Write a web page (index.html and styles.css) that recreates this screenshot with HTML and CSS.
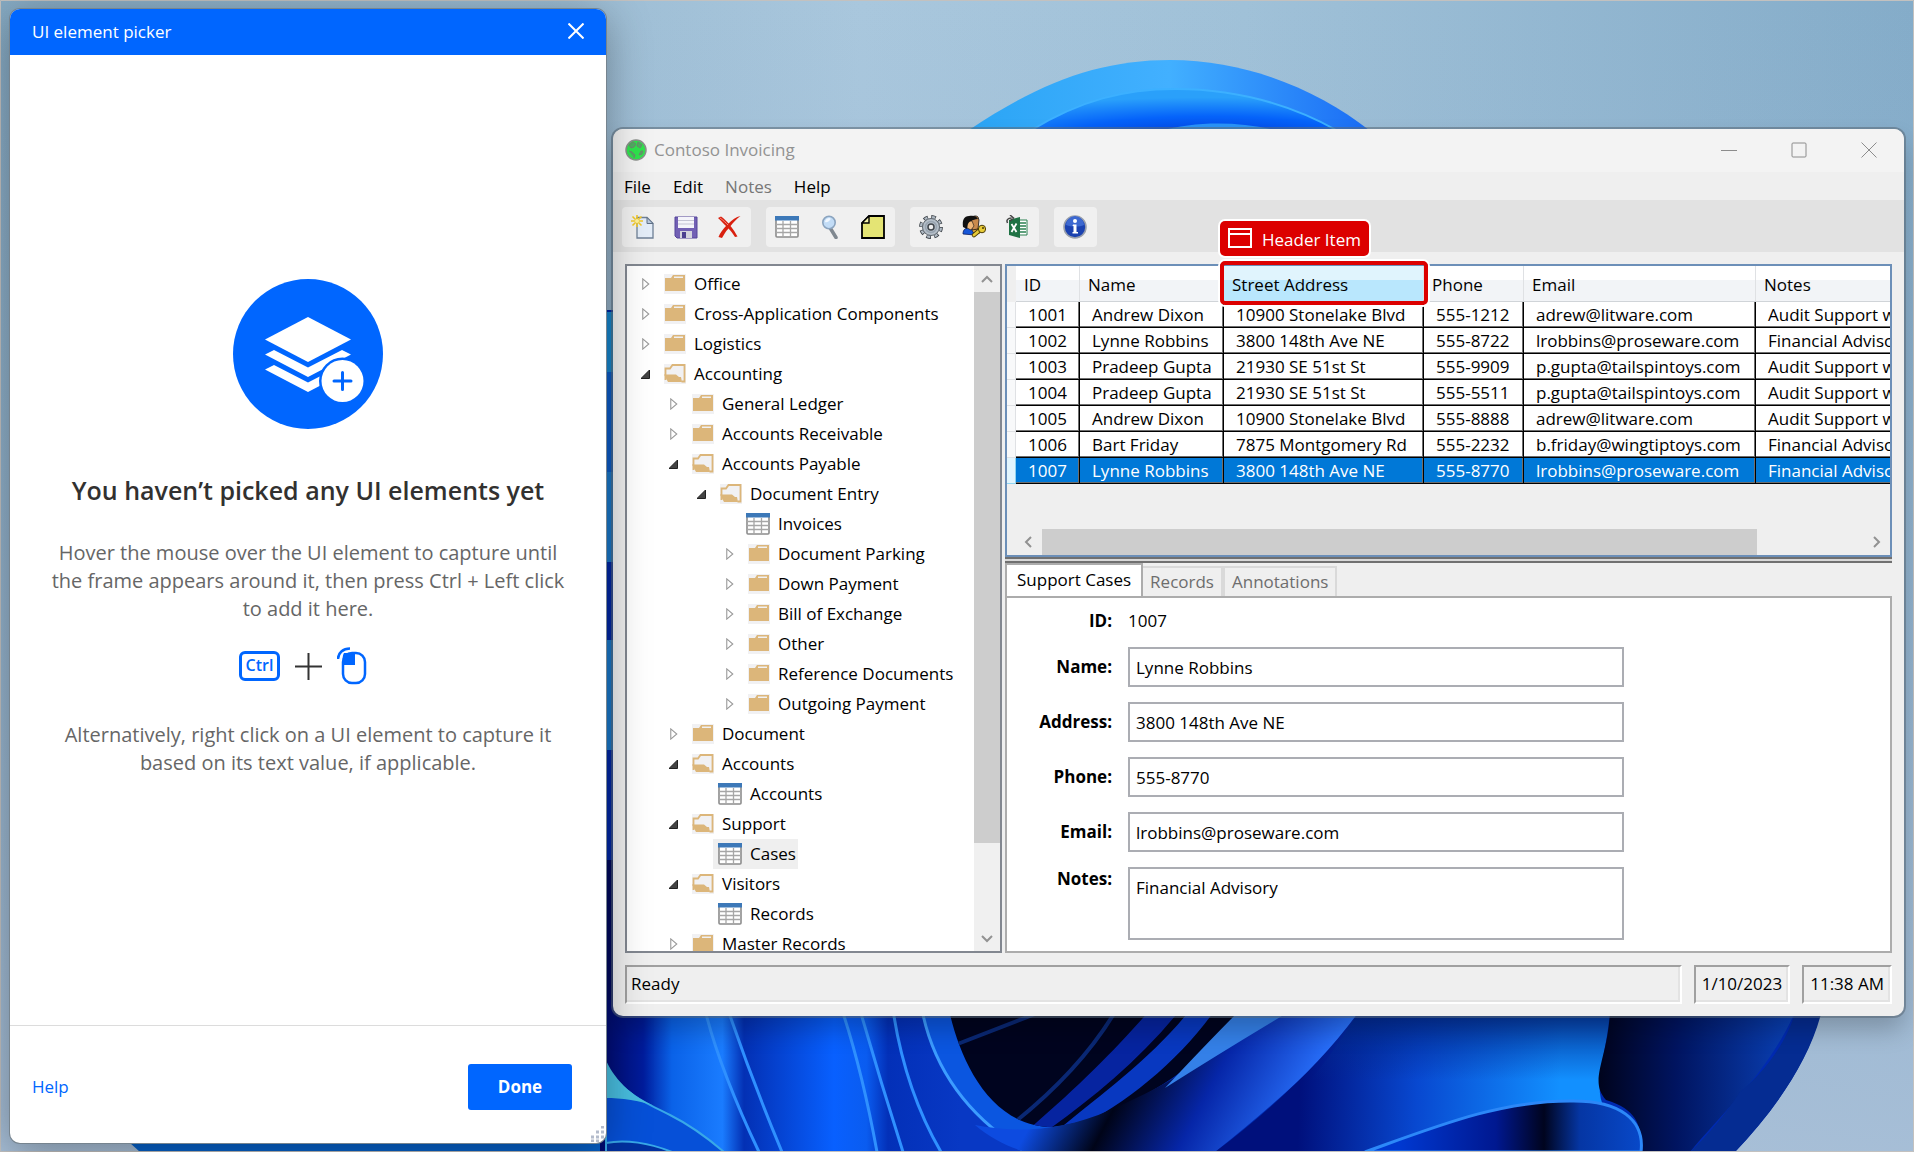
FILE: index.html
```html
<!DOCTYPE html>
<html lang="en">
<head>
<meta charset="utf-8">
<title>UI element picker</title>
<link rel="stylesheet" href="styles.css">
</head>
<body>
<svg width="0" height="0" class="defs" aria-hidden="true">
  <defs>
    <symbol id="folder" viewBox="0 0 22 20">
      <rect width="22" height="20" fill="#f1f1f3"/>
      <path d="M1 4h6l2-3h12v16H1z" fill="#dcb67a"/>
      <path d="M10 2.500h9v1.500h-9z" fill="#f1f1f3"/>
    </symbol>
    <symbol id="folder-open" viewBox="0 0 22 20">
      <rect width="22" height="20" fill="#f1f1f3"/>
      <path d="M1.500 16V4.500H6L8.500 1h12v16.500h-3" fill="none" stroke="#dcb67a" stroke-width="1.800"/>
      <path d="M0 10.500h12l3 2.500h2l1 5H4z" fill="#dcb67a"/>
    </symbol>
    <symbol id="grid" viewBox="0 0 24 22">
      <rect x="1" y="1" width="22" height="20" rx="1" fill="#fff" stroke="#8c8c8c" stroke-width="1.600"/>
      <path d="M1 8.500h22M1 12.500h22M1 16.500h22M8 5v16M15.500 5v16" stroke="#a6a6a6" stroke-width="1.300"/>
      <path d="M0 0h24v4.500H0z" fill="#3c78b8"/>
    </symbol>
    <symbol id="closed" viewBox="0 0 9 13">
      <path d="M1 1v11l6.500-5.500z" fill="#fff" stroke="#9a9a9a" stroke-width="1.200"/>
    </symbol>
    <symbol id="opened" viewBox="0 0 10 12">
      <path d="M8.500 2v8.500H0z" fill="#444" stroke="#222"/>
    </symbol>
  </defs>
</svg>

<svg class="wallpaper" viewBox="0 0 1914 1152" preserveAspectRatio="xMidYMid slice" aria-hidden="true">
  <defs>
    <linearGradient id="sky" x1="0" y1="0" x2="1" y2="0"><stop offset="0" stop-color="#86aac3"/><stop offset=".45" stop-color="#a9c7dd"/><stop offset=".65" stop-color="#a0c1d8"/><stop offset="1" stop-color="#84acc9"/></linearGradient>
    <linearGradient id="haze" x1="0" y1="0" x2="0" y2="1"><stop offset="0" stop-color="#98b4d0" stop-opacity="0"/><stop offset="1" stop-color="#aac0d8" stop-opacity=".9"/></linearGradient>
    <linearGradient id="petal1" x1="0" y1="0" x2="1" y2="0"><stop offset="0" stop-color="#2ba5f5"/><stop offset=".5" stop-color="#42b0ff"/><stop offset="1" stop-color="#1a6cf5"/></linearGradient>
    <radialGradient id="petal2" cx=".58" cy="1.1" r=".9"><stop offset="0" stop-color="#0340e0"/><stop offset=".5" stop-color="#0563fa"/><stop offset="1" stop-color="#2aa0fa"/></radialGradient>
    <linearGradient id="left" gradientUnits="userSpaceOnUse" x1="600" y1="0" x2="960" y2="0"><stop offset="0" stop-color="#000a70"/><stop offset=".12" stop-color="#001c9c"/><stop offset=".2" stop-color="#0a62e8"/><stop offset=".34" stop-color="#1a7cff"/><stop offset=".4" stop-color="#0330b4"/><stop offset=".65" stop-color="#0860ff"/><stop offset=".74" stop-color="#0a5cf0"/><stop offset=".8" stop-color="#0330b8"/><stop offset="1" stop-color="#0838c4"/></linearGradient>
    <linearGradient id="fold" gradientUnits="userSpaceOnUse" x1="1080" y1="1030" x2="1290" y2="1140"><stop offset="0" stop-color="#0d4be0"/><stop offset=".28" stop-color="#000418"/><stop offset=".6" stop-color="#0626a8"/><stop offset="1" stop-color="#2a74ff"/></linearGradient>
    <linearGradient id="sheet" gradientUnits="userSpaceOnUse" x1="1300" y1="1080" x2="1560" y2="1090"><stop offset="0" stop-color="#00107c"/><stop offset=".45" stop-color="#0848d0"/><stop offset="1" stop-color="#1290ff"/></linearGradient>
    <linearGradient id="shade" x1="0" y1="0" x2="0" y2="1"><stop offset="0" stop-color="#022a90" stop-opacity=".9"/><stop offset=".7" stop-color="#022a90" stop-opacity="0"/></linearGradient>
    <linearGradient id="right" gradientUnits="userSpaceOnUse" x1="1600" y1="0" x2="1790" y2="0"><stop offset="0" stop-color="#00041e"/><stop offset=".4" stop-color="#001460"/><stop offset="1" stop-color="#0a40b4"/></linearGradient>
    <linearGradient id="cup" gradientUnits="userSpaceOnUse" x1="1400" y1="0" x2="1640" y2="0"><stop offset="0" stop-color="#0038d0"/><stop offset=".4" stop-color="#001890"/><stop offset=".6" stop-color="#00041e"/><stop offset=".75" stop-color="#0536a4"/><stop offset="1" stop-color="#0848c8"/></linearGradient>
    <clipPath id="valley"><path d="M949 1010C960 1060 990 1127 1053 1127C1110 1120 1160 1090 1210 1050L1290 1010z"/></clipPath>
  </defs>
  <path d="M0 0h1914v1152H0z" fill="url(#sky)"/>
  <path d="M0 0h1914v1152H0z" fill="url(#haze)"/>
  <path d="M969 130C1040 82 1100 60 1170 60C1250 60 1320 92 1369 130V300H969z" fill="url(#petal1)"/>
  <path d="M1030 131C1080 100 1125 89 1175 89C1235 89 1290 104 1338 131z" fill="url(#petal2)" stroke="#3cb0ff" stroke-width="2"/>
  <path d="M1160 131C1195 121 1240 121 1280 131z" fill="#2a94f8"/>
  <path d="M600 310L560 340V1152H1735C1775 1110 1810 1060 1821 1010V900H1300V310z" fill="#002ab0"/>
  <path d="M600 312h20v60h-20z" fill="#1890dc"/>
  <path d="M600 372h20v100h-20z" fill="#0c62d4"/>
  <path d="M600 472h20v90h-20zM600 640h20v110h-20z" fill="#1c80d8"/>
  <path d="M600 860h20v157h-20z" fill="#000a64"/>
  <path d="M130 1143H610V1152H140z" fill="#0560c8"/>
  <path d="M600 1000H950L1060 1152H600z" fill="url(#left)"/>
  <g fill="none" stroke-width="3" stroke="#2f90ff">
    <path d="M705 1010Q720 1070 759 1152M728 1010Q752 1080 782 1152M842 1010Q862 1070 877 1152M860 1010Q880 1080 903 1152M893 1010Q905 1090 941 1152"/>
  </g>
  <path d="M922 1010Q940 1100 1026 1152H1110L1160 1080L949 1010z" fill="#0b56e0"/>
  <path d="M922 1010Q940 1100 1026 1152" fill="none" stroke="#3c9cff" stroke-width="3"/>
  <path d="M606 1068C625 1095 650 1105 670 1115C690 1125 710 1140 724 1152H606z" fill="#0650d8" stroke="#38a8e8" stroke-width="2"/>
  <path d="M606 1143C625 1139 650 1143 672 1152H606z" fill="#0230a0" stroke="#38a8e8" stroke-width="2"/>
  <path d="M606 1060C612 1075 630 1098 660 1108C640 1100 620 1098 606 1098z" fill="#48bee0"/>
  <path d="M949 1010C960 1060 990 1127 1053 1127C1110 1120 1160 1090 1210 1050L1290 1010z" fill="#00041f"/>
  <g clip-path="url(#valley)">
    <path d="M1015 1122Q1080 1070 1115 1012M955 1045L1035 1014" stroke="#0a2874" stroke-width="4" fill="none"/>
    <path d="M1028 1130C1080 1085 1115 1050 1150 1010H1180C1140 1060 1090 1100 1048 1130z" fill="#0624a0"/>
    <path d="M1058 1130C1100 1095 1150 1060 1190 1010H1215C1180 1060 1120 1110 1070 1130z" fill="#0838c0"/>
  </g>
  <path d="M1026 1152C1010 1148 990 1138 975 1125C1010 1132 1060 1133 1110 1110C1180 1080 1220 1050 1270 1010H1362Q1330 1060 1215 1152z" fill="url(#fold)"/>
  <path d="M1165 1088Q1225 1050 1292 1010H1240Q1210 1040 1165 1088z" fill="#3480e8"/>
  <path d="M1360 1010H1610C1606 1060 1592 1085 1605 1110L1365 1152H1215Q1310 1080 1360 1010z" fill="url(#sheet)"/>
  <path d="M1360 1010H1610C1608 1050 1598 1080 1600 1110H1285Q1330 1060 1360 1010z" fill="url(#shade)"/>
  <path d="M1610 1010C1608 1060 1588 1080 1606 1100C1640 1110 1642 1130 1641 1152H1690C1725 1110 1770 1070 1796 1010z" fill="url(#right)"/>
  <path d="M1796 1010C1785 1050 1755 1080 1740 1092C1725 1115 1708 1135 1690 1152H1735C1775 1110 1810 1060 1822 1010z" fill="#052c92"/>
  <path d="M1365 1152C1440 1125 1500 1101 1570 1101C1620 1100 1645 1120 1641 1152z" fill="url(#cup)" stroke="#2c88f8" stroke-width="3"/>
  <path d="M.5 .5h1913v1151H.5z" fill="none" stroke="#c3c1bf"/>
</svg>

<main class="desktop">
  <section class="invoicing" aria-label="Contoso Invoicing">
    <header class="titlebar">
      <svg class="app-icon" viewBox="0 0 22 22"><circle cx="11" cy="11" r="10" fill="#2fe34c" stroke="#8a8f8a" stroke-width="1.500"/><path d="M4 6l4-3 3 2-2 3-3 1zM13 3l4 3-2 3-3-2zM4 12l3 1 3 3-1 3M16 12l2 0-1 3-3 1z" fill="#4fae60" stroke="#6c8a6e"/></svg>
      <h1 class="titlebar-text">Contoso Invoicing</h1>
      <button class="caption" aria-label="Minimize"><svg viewBox="0 0 16 16"><path d="M0 8.500h16"/></svg></button>
      <button class="caption" aria-label="Maximize"><svg viewBox="0 0 16 16"><rect x="1" y="1" width="14" height="14" rx="1"/></svg></button>
      <button class="caption" aria-label="Close"><svg viewBox="0 0 16 16"><path d="M.5.5l15 15M15.500.5l-15 15"/></svg></button>
    </header>
    <nav class="menubar">
      <button>File</button><button>Edit</button><button disabled>Notes</button><button>Help</button>
    </nav>
    <div class="toolbar">
      <div class="tools">
        <button aria-label="New"><svg viewBox="0 0 24 24"><path d="M6 2.500h10l6 6V23H6z" fill="#e4edf8" stroke="#6f8096" stroke-width="1.300"/><path d="M16 2.500v6h6z" fill="#b8c8dc" stroke="#5f7086"/><path d="M6 0v12M0 6h12M1.500 1.500l9 9M10.500 1.500l-9 9" stroke="#f2c928" stroke-width="1.600"/><circle cx="6" cy="6" r="2" fill="#fff29a"/></svg></button>
        <button aria-label="Save"><svg viewBox="0 0 24 24"><path d="M1 2h22v21H3l-2-2z" fill="#7260b4" stroke="#54449a"/><path d="M4 2h16v11H4z" fill="#f4f4fa"/><path d="M4 5.500h16M4 9h16" stroke="#c4c4d4"/><path d="M6 16h12v7H6z" fill="#d4d4de"/><path d="M8 17h4v6H8z" fill="#4c4090"/></svg></button>
        <button aria-label="Delete"><svg viewBox="0 0 24 24"><path d="M1 3l3-1.500c3 2 5 4 7.500 7C15 5 19 2 23.500 1c-4 3-7 6-10 10 3 3.500 5 7 7 10.500L18 22c-2-3-4-6-6.500-8.500C8 17 7 20 5 23l-3.500-1C3 18 6 14 9 11 6 8 4 6 1 3z" fill="#d9200f"/><path d="M3 3c3 2 6 5 8 7" stroke="#f58a7c" fill="none"/></svg></button>
      </div>
      <div class="tools">
        <button aria-label="Table"><svg viewBox="0 0 24 24"><use href="#grid" width="24" height="22" y="1"/></svg></button>
        <button aria-label="Search"><svg viewBox="0 0 24 24"><path d="M12.500 13.500L18 22.500" stroke="#808890" stroke-width="3.500" stroke-linecap="round"/><circle cx="11" cy="7.500" r="6.200" fill="#c2dcf6" stroke="#8ba4bf" stroke-width="1.600"/><path d="M7 7a4.500 4.500 0 014-4c2 0 2 1 1 2s-3 3-5 2z" fill="#f0f7ff"/></svg></button>
        <button aria-label="Note"><svg viewBox="0 0 24 24"><path d="M8 1h15v22H1V8z" fill="#e4e474" stroke="#000" stroke-width="1.800"/><path d="M8 1v7H1z" fill="#f4f4a8" stroke="#000" stroke-width="1.400"/></svg></button>
      </div>
      <div class="tools">
        <button aria-label="Settings"><svg viewBox="0 0 24 24"><circle cx="12" cy="12" r="10.200" fill="none" stroke="#3c4248" stroke-width="3.400" stroke-dasharray="4.600 3.410"/><circle cx="12" cy="12" r="9.800" fill="none" stroke="#b0bac4" stroke-width="2.600" stroke-dasharray="3 4.697" stroke-dashoffset="-.8"/><circle cx="12" cy="12" r="8.500" fill="#b4bec8" stroke="#5c646c" stroke-width="1"/><circle cx="12" cy="12" r="5.500" fill="none" stroke="#98a4b0" stroke-width="1.500"/><circle cx="12" cy="12" r="3" fill="#efefef" stroke="#40464c" stroke-width="1.500"/></svg></button>
        <button aria-label="Permissions"><svg viewBox="0 0 24 24"><path d="M10 13h8v6h-9z" fill="#e8b040"/><path d="M9 4c1-3 5-4 7-2l1 3-1 9-6 1z" fill="#c98a4c" stroke="#111" stroke-width=".8"/><path d="M1 19c0-5 3-7 8-5l4 6z" fill="#1656d8" stroke="#0a1c60" stroke-width=".8"/><path d="M5 6h5l2 5-3 4-4-2z" fill="#f0b878" stroke="#111" stroke-width=".6"/><path d="M1 12C0 5 2 1 7 1c4-1 8 0 9 3-3 0-5 1-7 2-3 1-4 5-4 8z" fill="#111"/><path d="M12 20l6-5" stroke="#4a3a08" stroke-width="4.500" stroke-linecap="round"/><path d="M12 20l6-5" stroke="#e8cc38" stroke-width="2.800" stroke-linecap="round"/><ellipse cx="20" cy="14" rx="3.600" ry="3.800" fill="#e8cc38" stroke="#4a3a08"/><circle cx="21" cy="13" r="1" fill="#4a3a08"/></svg></button>
        <button aria-label="Export to Excel"><svg viewBox="0 0 24 24"><path d="M14 5h8v15h-8z" fill="#fff" stroke="#2a8050"/><path d="M15 8h6M15 11h6M15 14h6M15 17h6" stroke="#2a8050" stroke-width="1.500"/><path d="M4 5l11-3v21L4 20z" fill="#1f7244"/><path d="M6.500 9l5 8M11.500 8.500L6.500 17" stroke="#fff" stroke-width="1.800"/><path d="M2.500 8C1 5 3 3 6.500 3M5 0l3.500 3L5 6" fill="none" stroke="#444" stroke-width="1.500"/></svg></button>
      </div>
      <div class="tools">
        <button aria-label="About"><svg viewBox="0 0 24 24"><circle cx="12" cy="12" r="11" fill="#1b42b0" stroke="#9aa0ac" stroke-width="1.600"/><path d="M3 10a9 9 0 0118 0c-5 2-12 2-18 0z" fill="#3c68d0"/><circle cx="12" cy="6" r="2" fill="#fff"/><path d="M10 9.500h3.500V17H15v1.500H9.500V17H10.500v-6H9.500z" fill="#fff"/></svg></button>
      </div>
    </div>

    <div class="panes">
      <div class="tree-pane">
        <ul class="tree">
          <li><button class="node"><svg class="exp"><use href="#closed"/></svg><svg class="ico"><use href="#folder"/></svg>Office</button></li>
          <li><button class="node"><svg class="exp"><use href="#closed"/></svg><svg class="ico"><use href="#folder"/></svg>Cross-Application Components</button></li>
          <li><button class="node"><svg class="exp"><use href="#closed"/></svg><svg class="ico"><use href="#folder"/></svg>Logistics</button></li>
          <li><button class="node"><svg class="exp"><use href="#opened"/></svg><svg class="ico"><use href="#folder-open"/></svg>Accounting</button>
            <ul>
              <li><button class="node"><svg class="exp"><use href="#closed"/></svg><svg class="ico"><use href="#folder"/></svg>General Ledger</button></li>
              <li><button class="node"><svg class="exp"><use href="#closed"/></svg><svg class="ico"><use href="#folder"/></svg>Accounts Receivable</button></li>
              <li><button class="node"><svg class="exp"><use href="#opened"/></svg><svg class="ico"><use href="#folder-open"/></svg>Accounts Payable</button>
                <ul>
                  <li><button class="node"><svg class="exp"><use href="#opened"/></svg><svg class="ico"><use href="#folder-open"/></svg>Document Entry</button>
                    <ul>
                      <li><button class="node leaf"><svg class="sheet"><use href="#grid"/></svg>Invoices</button></li>
                      <li><button class="node"><svg class="exp"><use href="#closed"/></svg><svg class="ico"><use href="#folder"/></svg>Document Parking</button></li>
                      <li><button class="node"><svg class="exp"><use href="#closed"/></svg><svg class="ico"><use href="#folder"/></svg>Down Payment</button></li>
                      <li><button class="node"><svg class="exp"><use href="#closed"/></svg><svg class="ico"><use href="#folder"/></svg>Bill of Exchange</button></li>
                      <li><button class="node"><svg class="exp"><use href="#closed"/></svg><svg class="ico"><use href="#folder"/></svg>Other</button></li>
                      <li><button class="node"><svg class="exp"><use href="#closed"/></svg><svg class="ico"><use href="#folder"/></svg>Reference Documents</button></li>
                      <li><button class="node"><svg class="exp"><use href="#closed"/></svg><svg class="ico"><use href="#folder"/></svg>Outgoing Payment</button></li>
                    </ul>
                  </li>
                </ul>
              </li>
              <li><button class="node"><svg class="exp"><use href="#closed"/></svg><svg class="ico"><use href="#folder"/></svg>Document</button></li>
              <li><button class="node"><svg class="exp"><use href="#opened"/></svg><svg class="ico"><use href="#folder-open"/></svg>Accounts</button>
                <ul><li><button class="node leaf"><svg class="sheet"><use href="#grid"/></svg>Accounts</button></li></ul>
              </li>
              <li><button class="node"><svg class="exp"><use href="#opened"/></svg><svg class="ico"><use href="#folder-open"/></svg>Support</button>
                <ul><li><button class="node leaf selected"><svg class="sheet"><use href="#grid"/></svg>Cases</button></li></ul>
              </li>
              <li><button class="node"><svg class="exp"><use href="#opened"/></svg><svg class="ico"><use href="#folder-open"/></svg>Visitors</button>
                <ul><li><button class="node leaf"><svg class="sheet"><use href="#grid"/></svg>Records</button></li></ul>
              </li>
              <li><button class="node"><svg class="exp"><use href="#closed"/></svg><svg class="ico"><use href="#folder"/></svg>Master Records</button></li>
            </ul>
          </li>
        </ul>
        <div class="scroll-y">
          <button aria-label="Scroll up"><svg viewBox="0 0 12 12"><path d="M1 9l5-5 5 5"/></svg></button>
          <div class="track-y"><div class="thumb-y"></div></div>
          <button aria-label="Scroll down"><svg viewBox="0 0 12 12"><path d="M1 4l5 5 5-5"/></svg></button>
        </div>
      </div>

      <div class="detail-pane">
        <div class="grid-pane">
          <div class="grid-scroll">
            <table class="cases">
              <colgroup><col class="c-head"><col class="c-id"><col class="c-name"><col class="c-street"><col class="c-phone"><col class="c-email"><col class="c-notes"></colgroup>
              <thead><tr><td></td><th>ID</th><th>Name</th><th class="picked">Street Address
                <div class="frame"></div>
                <div class="tag"><svg viewBox="0 0 24 20"><path d="M1 1h22v18H1zM1 6h22"/></svg>Header Item</div>
              </th><th>Phone</th><th>Email</th><th>Notes</th></tr></thead>
              <tbody>
                <tr><td></td><td>1001</td><td>Andrew Dixon</td><td>10900 Stonelake Blvd</td><td>555-1212</td><td>adrew@litware.com</td><td>Audit Support w</td></tr>
                <tr><td></td><td>1002</td><td>Lynne Robbins</td><td>3800 148th Ave NE</td><td>555-8722</td><td>lrobbins@proseware.com</td><td>Financial Advisory</td></tr>
                <tr><td></td><td>1003</td><td>Pradeep Gupta</td><td>21930 SE 51st St</td><td>555-9909</td><td>p.gupta@tailspintoys.com</td><td>Audit Support w</td></tr>
                <tr><td></td><td>1004</td><td>Pradeep Gupta</td><td>21930 SE 51st St</td><td>555-5511</td><td>p.gupta@tailspintoys.com</td><td>Audit Support w</td></tr>
                <tr><td></td><td>1005</td><td>Andrew Dixon</td><td>10900 Stonelake Blvd</td><td>555-8888</td><td>adrew@litware.com</td><td>Audit Support w</td></tr>
                <tr><td></td><td>1006</td><td>Bart Friday</td><td>7875 Montgomery Rd</td><td>555-2232</td><td>b.friday@wingtiptoys.com</td><td>Financial Advisory</td></tr>
                <tr class="current"><td></td><td>1007</td><td>Lynne Robbins</td><td>3800 148th Ave NE</td><td>555-8770</td><td>lrobbins@proseware.com</td><td>Financial Advisory</td></tr>
              </tbody>
            </table>
          </div>
          <div class="scroll-x">
            <button aria-label="Scroll left"><svg viewBox="0 0 12 12"><path d="M8 1L3 6l5 5"/></svg></button>
            <div class="track-x"><div class="thumb-x"></div></div>
            <button aria-label="Scroll right"><svg viewBox="0 0 12 12"><path d="M3 1l5 5-5 5"/></svg></button>
          </div>
        </div>
        <div class="splitter"></div>
        <div class="tabs" role="tablist">
          <button role="tab" aria-selected="true" class="active">Support Cases</button>
          <button role="tab" aria-selected="false">Records</button>
          <button role="tab" aria-selected="false">Annotations</button>
        </div>
        <form class="record">
          <span class="label">ID:</span><output>1007</output>
          <label class="label" for="f-name">Name:</label><input id="f-name" value="Lynne Robbins">
          <label class="label" for="f-address">Address:</label><input id="f-address" value="3800 148th Ave NE">
          <label class="label" for="f-phone">Phone:</label><input id="f-phone" value="555-8770">
          <label class="label" for="f-email">Email:</label><input id="f-email" value="lrobbins@proseware.com">
          <label class="label top" for="f-notes">Notes:</label><textarea id="f-notes">Financial Advisory</textarea>
        </form>
      </div>
    </div>

    <footer class="status">
      <div class="cell wide">Ready</div><div class="cell">1/10/2023</div><div class="cell">11:38 AM</div>
    </footer>
  </section>

  <section class="picker" aria-label="UI element picker">
    <header class="picker-head">
      <span>UI element picker</span>
      <button aria-label="Close"><svg viewBox="0 0 16 16"><path d="M.5.5l15 15M15.500.5l-15 15"/></svg></button>
    </header>
    <div class="picker-body">
      <svg class="hero" viewBox="0 0 150 150" aria-hidden="true">
        <circle cx="75" cy="75" r="75" fill="#0066ff"/>
        <g fill="#fff">
          <path d="M75 38l43 22.500-43 22.500-43-22.500z"/>
          <path d="M41 71l34 17.500L109 71l9 4.500L75 98 32 75.500z"/>
          <path d="M41 86l34 17.500L109 86l9 4.500L75 113 32 90.500z"/>
        </g>
        <circle cx="109.500" cy="102" r="21" fill="#fff" stroke="#0066ff" stroke-width="5"/>
        <circle cx="109.500" cy="102" r="21" fill="#fff"/>
        <path d="M109.500 93.500v17M101 102h17" stroke="#0066ff" stroke-width="3" stroke-linecap="round"/>
      </svg>
      <h2>You haven’t picked any UI elements yet</h2>
      <p>Hover the mouse over the UI element to capture until the frame appears around it, then press Ctrl + Left click to add it here.</p>
      <div class="combo">
        <kbd>Ctrl</kbd>
        <svg class="plus" viewBox="0 0 27 27"><path d="M13.500 0v27M0 13.500h27"/></svg>
        <svg class="mouse" viewBox="0 0 30 38"><path d="M7 6h11V18H6c0-5-1-9 1-12z" fill="#0066ff"/><rect x="6" y="6" width="22" height="30" rx="9" fill="none" stroke="#0066ff" stroke-width="2.500"/><path d="M1 12C1 6 6 1.500 13 1.500" fill="none" stroke="#0066ff" stroke-width="2.500"/></svg>
      </div>
      <p>Alternatively, right click on a UI element to capture it based on its text value, if applicable.</p>
    </div>
    <footer class="picker-foot">
      <a href="#help">Help</a>
      <button>Done</button>
      <svg class="grip" viewBox="0 0 16 16" aria-hidden="true"><path d="M12 1h3M7 6h3M12 6h3M2 11h3M7 11h3M12 11h3M2 15h3M7 15h3" stroke="#b4bccc" stroke-width="3"/></svg>
    </footer>
  </section>
</main>
</body>
</html>
```
FILE: styles.css
```css
* { box-sizing: border-box; }

body {
  margin: 0;
  min-height: 100vh;
  overflow: hidden;
  font: 17px/24px "Open Sans", "Noto Sans", sans-serif;
  color: #000;
}

button, input, textarea, output { font: inherit; color: inherit; }
button { margin: 0; padding: 0; border: 0; background: none; }
ul { margin: 0; padding: 0; list-style: none; }

.defs { position: absolute; }

.wallpaper {
  position: absolute;
  inset: 0;
  width: 100%;
  height: 100%;
}

.desktop {
  position: relative;
  height: 100vh;
}

/* Invoicing window */

.invoicing {
  position: absolute;
  top: 129px;
  right: 10px;
  bottom: 136px;
  left: 613px;
  display: flex;
  flex-direction: column;
  border-radius: 10px;
  background: #efefef;
  box-shadow: 0 0 0 2px rgba(90, 105, 120, .55), 0 14px 24px rgba(0, 0, 0, .22);
}

.titlebar {
  display: flex;
  align-items: center;
  height: 43px;
  padding: 0 0 2px 12px;
  border-radius: 10px 10px 0 0;
  background: #f3f3f3;
}

.app-icon { width: 22px; height: 22px; }

.titlebar-text {
  flex: 1;
  margin: 0 0 0 7px;
  font-size: 17px;
  font-weight: 400;
  color: #929292;
}

.caption {
  width: 70px;
  height: 41px;
  display: grid;
  place-items: center;
}

.caption svg {
  width: 16px;
  height: 16px;
  fill: none;
  stroke: #8c8c8c;
}

.menubar {
  display: flex;
  gap: 22px;
  height: 28px;
  padding: 2px 0 0 11px;
  align-items: center;
}

.menubar button:disabled { color: #767676; }

.toolbar {
  display: flex;
  gap: 15px;
  height: 52px;
  padding: 7px 9px 5px;
  background: #e2e2e2;
}

.tools {
  display: flex;
  border-radius: 4px;
  background: #f0f0f0;
}

.tools button {
  width: 43px;
  padding-right: 2px;
  display: grid;
  place-items: center;
}

.tools svg { width: 24px; height: 24px; }

.panes {
  flex: 1;
  min-height: 0;
  display: flex;
  gap: 3px;
  padding: 12px 12px 0;
}

/* Navigation tree */

.tree-pane {
  flex: none;
  width: 377px;
  display: flex;
  overflow: hidden;
  border: 2px solid #828790;
  background: #fff;
}

.tree {
  flex: 1;
  height: 0;
  padding: 3px 0 0 14px;
}

.tree ul { padding-left: 28px; }

.node {
  display: flex;
  align-items: center;
  height: 30px;
  padding-right: 2px;
  white-space: nowrap;
}

.exp { width: 10px; height: 12px; margin-right: 13px; }
.ico { width: 22px; height: 20px; margin-right: 8px; }
.sheet { width: 24px; height: 22px; margin-right: 8px; }
.leaf { margin-left: 16px; padding-left: 5px; }
.selected { background: #efefef; }

.scroll-y {
  width: 26px;
  display: flex;
  flex-direction: column;
  background: #f0f0f0;
}

.scroll-y button { height: 26px; }
.track-y { flex: 1; }
.thumb-y { height: 87%; background: #cdcdcd; }

.scroll-y svg, .scroll-x svg {
  width: 12px;
  height: 12px;
  fill: none;
  stroke: #929292;
  stroke-width: 2;
}

/* Case list */

.detail-pane {
  flex: 1;
  min-width: 0;
  display: flex;
  flex-direction: column;
}

.grid-pane {
  flex: none;
  display: flex;
  flex-direction: column;
  justify-content: space-between;
  height: 293px;
  border: 2px solid #6c8fb8;
}

.grid-scroll {
  height: 220px;
  overflow-x: clip;
}

.cases {
  width: 985px;
  table-layout: fixed;
  border-collapse: separate;
  border-spacing: 0;
}

.c-head { width: 9px; }
.c-id { width: 64px; }
.c-name { width: 144px; }
.c-street { width: 200px; }
.c-phone { width: 100px; }
.c-email { width: 232px; }

.cases th {
  height: 36px;
  padding: 2px 0 0 8px;
  border-right: 1px solid #dfe1e4;
  border-bottom: 1px solid #d0d4d8;
  background: linear-gradient(#fff 40%, #f2f4f7 41%);
  font-weight: 400;
  text-align: left;
}

.cases td {
  height: 26px;
  padding: 0 0 0 12px;
  line-height: 24px;
  white-space: nowrap;
}

.cases tbody td {
  border-right: 1px solid #000;
  border-bottom: 1px solid #000;
  background: #fff;
  box-shadow: inset -1px -1px #6e6e6e;
}

.cases tbody td:first-child {
  padding: 0;
  border-color: #dfe1e4;
  background: #f8f9fa;
  box-shadow: none;
}

.cases .current td { background: #0078d7; color: #fff; }
.cases .current td:first-child { background: #e2f5fe; border-color: #8fd4f2; }

.cases .picked {
  position: relative;
  background: linear-gradient(#e0f4fd 40%, #b9e7fd 41%);
}

.frame {
  position: absolute;
  inset: -5px -5px -4px -4px;
  border: 4px solid #dc0000;
  border-radius: 5px;
  box-shadow: 0 0 0 2px #fff;
}

.tag {
  position: absolute;
  left: -4px;
  bottom: 45px;
  z-index: 1;
  display: flex;
  align-items: center;
  gap: 10px;
  height: 35px;
  padding: 2px 8px 0;
  border-radius: 5px;
  background: #dc0000;
  box-shadow: 0 0 0 2px #fff;
  color: #fff;
  white-space: nowrap;
}

.tag svg {
  width: 24px;
  height: 20px;
  margin-bottom: 4px;
  fill: none;
  stroke: #fff;
  stroke-width: 2;
}

.scroll-x {
  display: flex;
  height: 26px;
  padding-left: 9px;
}

.scroll-x button { width: 26px; }
.track-x { flex: 1; }
.thumb-x { width: 87%; height: 26px; background: #cdcdcd; }

.splitter {
  flex: none;
  height: 6px;
  border: solid #707070;
  border-width: 2px 0;
  background: #d8d8d8;
}

.tabs {
  flex: none;
  display: flex;
  align-items: flex-end;
  height: 33px;
}

.tabs button {
  height: 30px;
  padding: 0 7px;
  border: 2px solid #d9d9d9;
  border-bottom: 0;
  border-left-width: 0;
  color: #6d6d6d;
  line-height: 28px;
}

.tabs button:last-child { border-left-width: 2px; }

.tabs .active {
  height: 33px;
  padding: 0 10px 2px;
  border-color: #acacac;
  border-left-width: 2px;
  background: #fff;
  color: #000;
}

/* Case form */

.record {
  flex: 1;
  display: grid;
  grid-template-columns: 105px minmax(0, 496px);
  grid-template-rows: 23px repeat(4, 40px) 73px;
  gap: 15px 16px;
  padding: 11px 0 0;
  border: 2px solid #acacac;
  background: #fff;
}

.label {
  align-self: center;
  text-align: right;
  font-weight: 700;
}

.label.top { align-self: start; }
.record output { align-self: center; }

.record input, .record textarea {
  width: 100%;
  height: 100%;
  margin: 0;
  padding: 0 6px;
  border: 2px solid #abadb3;
  border-radius: 0;
  background: #fff;
  outline: 0;
}

.record textarea { padding-top: 7px; resize: none; }

.status {
  display: flex;
  gap: 12px;
  height: 63px;
  padding: 12px;
}

.cell {
  padding: 0 6px;
  border: 2px solid #a0a0a0;
  border-color: #a0a0a0 #fff #fff #a0a0a0;
  box-shadow: inset -2px -2px #e3e3e3;
  line-height: 34px;
}

.wide { flex: 1; padding: 0 4px; }

/* Picker window */

.picker {
  position: absolute;
  top: 9px;
  bottom: 9px;
  left: 10px;
  width: 596px;
  display: flex;
  flex-direction: column;
  border-radius: 10px;
  background: #fff;
  box-shadow: 0 0 0 1px #76848f, 0 8px 44px rgba(0, 0, 0, .34);
}

.picker-head {
  display: flex;
  align-items: center;
  justify-content: space-between;
  height: 46px;
  padding: 0 22px;
  border-radius: 10px 10px 0 0;
  background: #06f;
  color: #fff;
}

.picker-head button { height: 16px; margin-bottom: 3px; }

.picker-head svg {
  display: block;
  width: 16px;
  height: 16px;
  stroke: #fff;
  stroke-width: 2;
}

.picker-body {
  flex: 1;
  display: flex;
  flex-direction: column;
  align-items: center;
  justify-content: center;
  padding: 0 40px 24px;
  text-align: center;
}

.hero { width: 150px; height: 150px; }

.picker h2 {
  margin: 43px 0 31px;
  font-size: 25px;
  font-weight: 600;
  line-height: 36px;
  color: #323130;
}

.picker p {
  margin: 0;
  font-size: 20px;
  line-height: 28px;
  color: #666;
}

.combo {
  display: flex;
  align-items: center;
  gap: 15px;
  height: 38px;
  margin: 24px 10px 36px 0;
}

.combo kbd {
  width: 41px;
  height: 30px;
  border: 3px solid #06f;
  border-radius: 6px;
  color: #06f;
  font: 600 16px/22px "Open Sans", sans-serif;
}

.plus {
  width: 27px;
  height: 27px;
  stroke: #333;
  stroke-width: 2;
}

.mouse { width: 30px; height: 38px; }

.picker-foot {
  position: relative;
  display: flex;
  align-items: center;
  justify-content: space-between;
  height: 118px;
  padding: 4px 34px 0 22px;
  border-top: 1px solid #dcdcdc;
}

.picker-foot a { color: #06f; text-decoration: none; }

.picker-foot button {
  width: 104px;
  height: 46px;
  border-radius: 3px;
  background: #06f;
  color: #fff;
  font-weight: 700;
}

.grip {
  position: absolute;
  right: 1px;
  bottom: 1px;
  width: 16px;
  height: 16px;
}
```
